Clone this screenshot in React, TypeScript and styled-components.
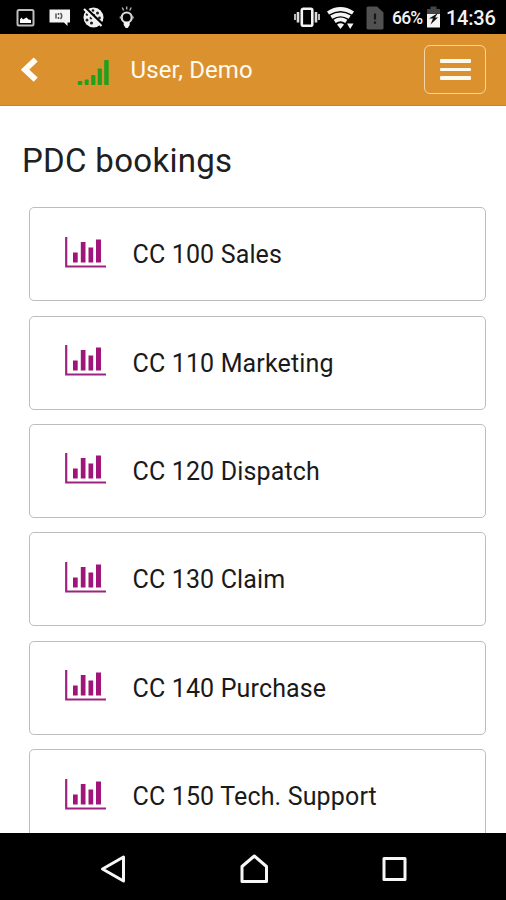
import React from 'react';
import styled, { createGlobalStyle } from 'styled-components';

const GlobalStyle = createGlobalStyle`
  * { box-sizing: border-box; }
  body { margin: 0; background: #fff; font-family: Roboto, sans-serif; }
  svg { display: block; flex: none; }
`;

const Screen = styled.div`
  width: 506px;
  height: 900px;
  display: flex;
  flex-direction: column;
  overflow: hidden;
  background: #fff;
`;

const StatusBar = styled.div`
  height: 34px;
  flex: none;
  display: flex;
  align-items: center;
  justify-content: space-between;
  padding: 0 11px 0 15px;
  background: #000;
  color: #f2f2f2;
`;

const StatusGroup = styled.div<{ $gap: number }>`
  display: flex;
  align-items: center;
  gap: ${p => p.$gap}px;
  height: 34px;
`;

const Battery = styled.div`
  display: flex;
  align-items: center;
  gap: 2px;
`;

const SimSlot = styled.div`
  margin: 2px 6px 0 6px;
`;

const Percent = styled.span`
  width: 32px;
  font-size: 17.5px;
  line-height: 34px;
  font-weight: 500;
  letter-spacing: -0.8px;
  padding-top: 1px;
  white-space: nowrap;
`;

const Clock = styled.span`
  width: 49px;
  font-size: 20px;
  line-height: 34px;
  font-weight: 500;
  letter-spacing: -0.25px;
  padding-top: 2px;
  white-space: nowrap;
`;

const Header = styled.header`
  height: 72px;
  flex: none;
  display: flex;
  align-items: center;
  padding: 0 20px;
  background: #db922e;
  border-bottom: 1px solid #d08317;
`;

const UserName = styled.span`
  flex: 1;
  margin-left: 21.5px;
  color: #fffaf0;
  font-size: 24px;
  line-height: 30px;
  font-weight: 400;
  letter-spacing: 0.1px;
`;

const MenuButton = styled.button`
  width: 62px;
  height: 49px;
  display: flex;
  flex-direction: column;
  align-items: center;
  justify-content: center;
  gap: 5px;
  padding: 0;
  background: none;
  border: 1.5px solid #f3d5a8;
  border-radius: 6px;
`;

const MenuLine = styled.span`
  width: 31px;
  height: 3.5px;
  border-radius: 1px;
  background: #fffaf0;
`;

const Content = styled.main`
  flex: 1;
  min-height: 0;
  overflow: hidden;
  padding: 35px 20.5px 0 22px;
`;

const Title = styled.h1`
  margin: 0;
  font-size: 33px;
  line-height: 40px;
  font-weight: 400;
  letter-spacing: 0.3px;
  color: #202022;
`;

const CardList = styled.div`
  display: flex;
  flex-direction: column;
  gap: 14.35px;
  margin: 26.3px 0 0 7px;
`;

const Card = styled.div`
  height: 94px;
  flex: none;
  display: flex;
  align-items: center;
  gap: 26px;
  padding: 0 35px 0 34.5px;
  border: 1.5px solid #bdbdbd;
  border-radius: 5px;
  color: #1a1a1a;
`;

const ChartSlot = styled.div`
  margin-top: -4px;
`;

const CardLabel = styled.span`
  margin-top: 2px;
  font-size: 25px;
  line-height: 32px;
  letter-spacing: 0.15px;
`;

const NavBar = styled.nav`
  height: 67px;
  flex: none;
  display: flex;
  align-items: center;
  gap: 110.5px;
  padding: 4px 0 0 99px;
  background: #000;
`;

const PictureIcon = () => (
  <svg width="20" height="20" viewBox="0 0 20 20">
    <rect x="2.5" y="3" width="16" height="15.5" rx="1.5" fill="none" stroke="#bdbdbd" strokeWidth="2" />
    <path d="M5 16V12.500l1.500-2 1.500 2 3.500-2 2 2 2.500 .5V16z" fill="#fff" />
  </svg>
);

const MessageIcon = () => (
  <svg width="22" height="22" viewBox="0 0 22 22">
    <path d="M1.500 3.500H22v13h-2.500v3.500L16 16.500H1.500z" fill="#f4f4f4" />
    <path d="M8 7.500v5M10.500 7v2M10.500 11v2M12.500 7q2.500 3 0 6" fill="none" stroke="#555" strokeWidth="1.500" />
  </svg>
);

const BallIcon = () => (
  <svg width="22" height="22" viewBox="0 0 22 22">
    <circle cx="11.500" cy="11.500" r="10" fill="#f2f2f2" />
    <g fill="#222">
      <circle cx="11" cy="4.500" r="1.300" /><circle cx="15.500" cy="7" r="1.500" />
      <circle cx="5" cy="8.500" r="1.300" /><circle cx="17.500" cy="12" r="1.400" />
      <circle cx="5" cy="14" r="1.500" /><circle cx="9.500" cy="17" r="1.600" />
      <circle cx="9" cy="12" r="1.400" /><circle cx="12" cy="9" r="1.100" />
    </g>
    <path d="M3.500 2l18 17" stroke="#000" strokeWidth="2.500" />
    <path d="M2 3l17.500 17" stroke="#f2f2f2" strokeWidth="2.200" />
  </svg>
);

const BulbIcon = () => (
  <svg width="18" height="24" viewBox="0 0 18 24">
    <g transform="translate(.7 0)">
      <path d="M9 1.500v3M4.500 2.500l1.500 3M13.500 2.500L12 5.500" stroke="#aaa" strokeWidth="1.500" />
      <circle cx="9" cy="12.500" r="5" fill="none" stroke="#ddd" strokeWidth="2.200" />
      <path d="M2 12.500h2M14 12.500h2" stroke="#bbb" strokeWidth="1.800" />
      <path d="M6 17h6v3l-2 3H8l-2-3z" fill="#f5f5f5" />
    </g>
  </svg>
);

const VibrateIcon = () => (
  <svg width="28" height="22" viewBox="0 0 28 22">
    <g transform="translate(-1 0)">
      <rect x="8.800" y="2.800" width="10.500" height="17" rx="1.500" fill="none" stroke="#f4f4f4" strokeWidth="2.600" />
      <path d="M5 6v10.500M23 6v10.500" stroke="#ddd" strokeWidth="2.600" />
      <path d="M2 8v6M26 8v6" stroke="#bbb" strokeWidth="2" />
    </g>
  </svg>
);

const WifiIcon = () => (
  <svg width="28" height="24" viewBox="0 0 28 24">
    <g fill="none" stroke="#f4f4f4" strokeWidth="3.800">
      <path d="M1 8Q13.500 0 26 8" />
      <path d="M4.300 12.200Q13.500 6.500 22.700 12.200" />
      <path d="M7.700 16.300Q13.500 12.500 19.300 16.300" />
    </g>
    <path d="M10 19.500q3.500-2.500 7 0L13.500 24z" fill="#f4f4f4" />
    <path d="M20 18.500h6.500L23.200 24z" fill="#f4f4f4" />
  </svg>
);

const SimIcon = () => (
  <svg width="18" height="24" viewBox="0 0 18 24">
    <path d="M2 .5h9l6.500 6V22q0 1.500-1.500 1.500H2Q.5 23.500.5 22V2Q.5.500 2 .5z" fill="#515151" />
    <path d="M9 7.500v6M9 15.500v2.300" stroke="#171717" strokeWidth="2.200" />
  </svg>
);

const BatteryIcon = () => (
  <svg width="15" height="24" viewBox="0 0 15 24">
    <path d="M4.500 1.500h6v2.500H14v6H1V4h3.500z" fill="#444" />
    <path d="M1 9h13v13.500H1z" fill="#f4f4f4" />
    <path d="M12 8L3 13.500h4L4.500 19.500l7.500-7H9z" fill="#111" />
  </svg>
);

const BackIcon = () => (
  <svg width="20" height="28" viewBox="0 0 20 28">
    <path d="M15.700 3.500L5 13.700l10.700 10" fill="none" stroke="#fffdf8" strokeWidth="5.800" />
  </svg>
);

const SignalGap = styled.div`
  margin: 6px 0 0 37px;
`;

const SignalIcon = () => (
  <svg width="32" height="26" viewBox="0 0 32 26">
    <g fill="#1fa01f">
      <rect x=".8" y="21" width="4.500" height="4" rx="1" />
      <rect x="7.700" y="19.500" width="4" height="5.500" rx="1" />
      <rect x="14.200" y="15" width="4.200" height="10" rx=".7" />
      <rect x="20.700" y="8.500" width="4.200" height="16.500" rx=".7" />
      <rect x="27.200" y="0" width="4.500" height="25" rx=".7" />
    </g>
  </svg>
);

const ChartIcon = () => (
  <svg width="42" height="31" viewBox="0 0 42 31">
    <path d="M1.200 0v29.500H41" fill="none" stroke="#9c2480" strokeWidth="2.200" />
    <g fill="#a01579">
      <rect x="8" y="15.500" width="4.700" height="10" />
      <rect x="15.800" y="5" width="4.700" height="20.500" />
      <rect x="23.500" y="10.500" width="4.700" height="15" />
      <rect x="31" y="2.500" width="5" height="23" />
    </g>
  </svg>
);

const NavIcon = ({ d }: { d: string }) => (
  <svg width="30" height="30" viewBox="0 0 30 30">
    <path d={d} fill="none" stroke="#f7f7f7" strokeWidth="3" strokeLinejoin="round" />
  </svg>
);

const centers = ['CC 100 Sales', 'CC 110 Marketing', 'CC 120 Dispatch', 'CC 130 Claim', 'CC 140 Purchase', 'CC 150 Tech. Support'];

export default function App() {
  return (
    <>
      <GlobalStyle />
      <Screen>
        <StatusBar>
          <StatusGroup $gap={12.5}>
            <PictureIcon />
            <MessageIcon />
            <BallIcon />
            <BulbIcon />
          </StatusGroup>
          <StatusGroup $gap={5}>
            <VibrateIcon />
            <WifiIcon />
            <Battery>
              <SimSlot><SimIcon /></SimSlot>
              <Percent>66%</Percent>
              <BatteryIcon />
            </Battery>
            <Clock>14:36</Clock>
          </StatusGroup>
        </StatusBar>
        <Header>
          <BackIcon />
          <SignalGap><SignalIcon /></SignalGap>
          <UserName>User, Demo</UserName>
          <MenuButton aria-label="Menu">
            <MenuLine />
            <MenuLine />
            <MenuLine />
          </MenuButton>
        </Header>
        <Content>
          <Title>PDC bookings</Title>
          <CardList>
            {centers.map(name => (
              <Card key={name}>
                <ChartSlot><ChartIcon /></ChartSlot>
                <CardLabel>{name}</CardLabel>
              </Card>
            ))}
          </CardList>
        </Content>
        <NavBar>
          <NavIcon d="M3.500 15L24.500 3v24z" />
          <NavIcon d="M2 12.500L14.300 2 26.500 12.500V27.500H2z" />
          <NavIcon d="M4 4.500h21v21H4z" />
        </NavBar>
      </Screen>
    </>
  );
}
